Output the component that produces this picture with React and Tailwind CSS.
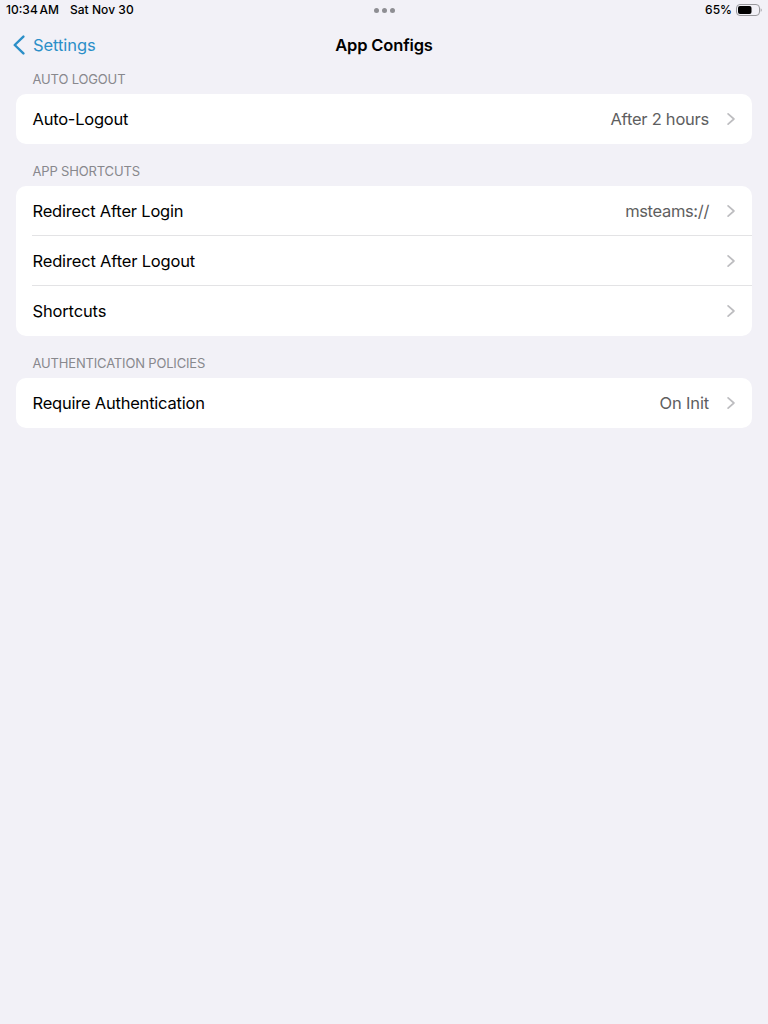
const sections = [
  {
    title: 'AUTO LOGOUT',
    titleClass: 'tracking-[-0.16px]',
    rows: [{ label: 'Auto-Logout', value: 'After 2 hours', labelClass: 'tracking-[-0.24px]', valueClass: 'tracking-[-0.24px]' }],
  },
  {
    title: 'APP SHORTCUTS',
    titleClass: 'tracking-[-0.16px]',
    rows: [
      { label: 'Redirect After Login', value: 'msteams://', labelClass: 'tracking-[-0.2px]', valueClass: 'tracking-[-0.34px]' },
      { label: 'Redirect After Logout', labelClass: 'tracking-[-0.17px]' },
      { label: 'Shortcuts', labelClass: 'tracking-[-0.15px]' },
    ],
  },
  {
    title: 'AUTHENTICATION POLICIES',
    titleClass: 'tracking-[-0.17px]',
    rows: [{ label: 'Require Authentication', value: 'On Init', labelClass: 'tracking-[-0.22px]', valueClass: 'tracking-[-0.15px]' }],
  },
];

function Chevron() {
  return (
    <svg className="ml-[18px] h-3 w-2 shrink-0" viewBox="0 0 8 12" fill="none" stroke="#bdbdc0" strokeWidth="1.7" strokeLinecap="round" strokeLinejoin="round">
      <path d="M1.1 0.9 6.9 6 1.1 11.1" />
    </svg>
  );
}

function Row({ label, value, labelClass, valueClass, last }) {
  const shift = last ? '' : 'pt-px';
  return (
    <div className="h-[50px] pl-4">
      <div className={`flex h-full items-center pr-[17px] ${last ? '' : 'border-b border-[#e3e3e5]'}`}>
        <span className={`flex-1 pl-[0.5px] text-black ${shift} ${labelClass}`}>{label}</span>
        {value && <span className={`text-[#5e5e60] ${shift} ${valueClass}`}>{value}</span>}
        <Chevron />
      </div>
    </div>
  );
}

function Section({ title, titleClass, rows }) {
  return (
    <section className="mb-[13px] px-4">
      <h2 className={`flex h-[29px] items-center pt-px pl-[16.5px] text-[13px] text-[#88888d] ${titleClass}`}>{title}</h2>
      <div className="overflow-hidden rounded-[10px] bg-white text-[16.5px] leading-[22px]">
        {rows.map((row, i) => (
          <Row key={row.label} {...row} last={i === rows.length - 1} />
        ))}
      </div>
    </section>
  );
}

function StatusBar() {
  return (
    <div className="grid h-5 grid-cols-3 items-center pr-[5px] pl-[6px] text-[12px] font-medium text-black">
      <div className="flex gap-[11px] whitespace-nowrap">
        <span className="[word-spacing:-1.5px]">10:34 AM</span>
        <span className="tracking-[0.05px]">Sat Nov 30</span>
      </div>
      <div className="flex justify-center gap-[3px]">
        <i className="size-[5px] rounded-full bg-[#8e8e93]" />
        <i className="size-[5px] rounded-full bg-[#8e8e93]" />
        <i className="size-[5px] rounded-full bg-[#8e8e93]" />
      </div>
      <div className="flex items-center justify-end gap-1">
        <span>65%</span>
        <svg className="mr-px h-3 w-[26px]" viewBox="0 0 26 12">
          <rect x="0.5" y="0.5" width="23" height="11" rx="3.5" fill="none" stroke="#98989c" />
          <rect x="2" y="2" width="13.5" height="8" rx="2" fill="#000" />
          <path d="M24.7 4.2c1.3.5 1.3 3.1 0 3.6z" fill="#98989c" />
        </svg>
      </div>
    </div>
  );
}

export default function App() {
  return (
    <main className="h-screen w-full overflow-hidden bg-[#f2f1f7] font-['Inter','Liberation_Sans',sans-serif]">
      <StatusBar />
      <nav className="grid h-[45px] grid-cols-3 items-center pt-[6px] pr-[13px] pb-px pl-[13px] text-[16.5px] leading-[22px]">
        <a className="flex items-center gap-2 text-[#2b8fc8]">
          <svg className="h-5 w-3" viewBox="0 0 12 20" fill="none" stroke="currentColor" strokeWidth="2.4" strokeLinecap="round" strokeLinejoin="round">
            <path d="M10.4 1.6 1.7 10l8.7 8.4" />
          </svg>
          <span className="tracking-[-0.07px]">Settings</span>
        </a>
        <h1 className="text-center font-semibold tracking-[-0.15px] text-black">App Configs</h1>
      </nav>
      {sections.map((section) => (
        <Section key={section.title} {...section} />
      ))}
    </main>
  );
}
